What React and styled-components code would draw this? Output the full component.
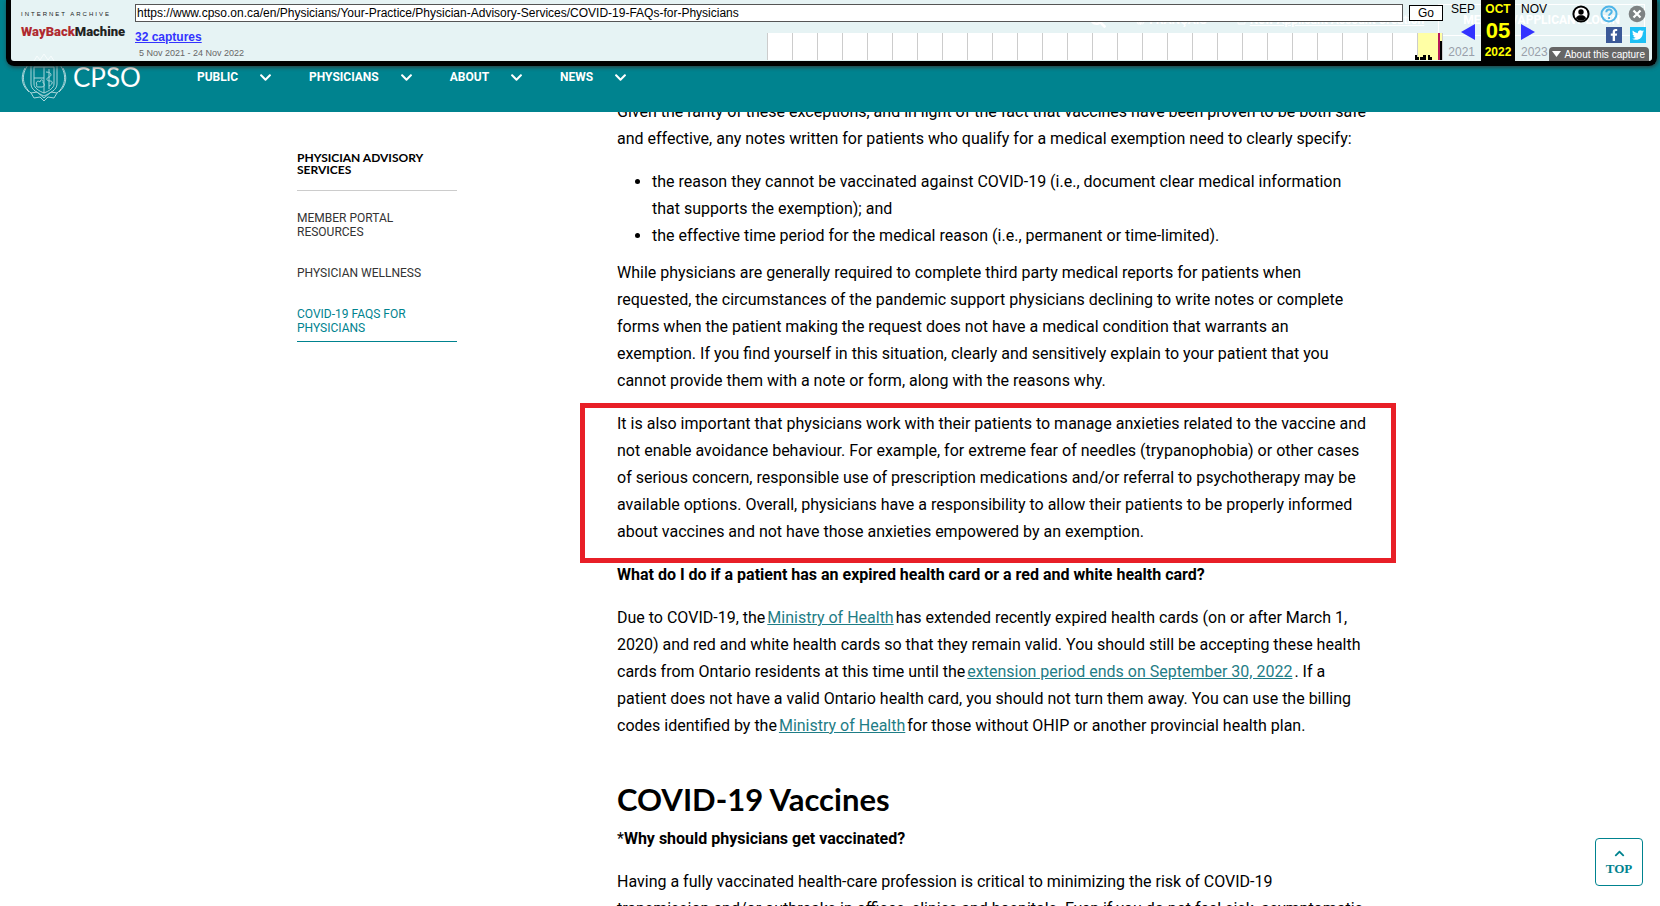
import React from 'react'
import styled, { createGlobalStyle } from 'styled-components'
import { FaChevronDown, FaChevronUp, FaFacebookF, FaTwitter, FaSearch, FaGlobe, FaRegSquare } from 'react-icons/fa'

const teal = '#00838f'

const menu = ['Public', 'Physicians', 'About', 'News']

const years = Array.from({ length: 27 }, (_, i) => 1996 + i)

const Crest = () => (
    <svg width="48" height="50" viewBox="0 0 48 50" fill="none" stroke="#a9d6da" strokeWidth="1">
        <path d="M11 12h26v20c0 6-7 9-13 12-6-3-13-6-13-12z" />
        <path d="M14 15h20v17c0 4-5 7-10 9-5-2-10-5-10-9z" />
        <path d="M24 15v26M14 26h10" />
        <path d="M17 33c-2-3 1-5 3-3 0-3 4-3 3 1 2 0 2 4-1 4h-4c-2 0-2-1-1-2z" />
        <path d="M29 17v20M26 20c6 0 6 4 3 5s-3 4 1 4 2 4-1 5" />
        <path d="M8 13c-7 9-6 21 3 28M5 16c-5 9-3 18 4 24M40 13c7 9 6 21-3 28M43 16c5 9 3 18-4 24" />
        <path d="M11 41l6-1 7 6 7-6 6 1-3 5-6-1-4 4-4-4-6 1z" />
        <path d="M14 9l3-5 3 4 4-6 4 6 3-4 3 5" />
    </svg>
)

const PersonIcon = () => (
    <svg width="18" height="18" viewBox="0 0 18 18">
        <circle cx="9" cy="9" r="7.6" fill="#fff" stroke="#000" strokeWidth="2" />
        <circle cx="9" cy="7" r="2.7" />
        <path d="M3.8 13.2c1.2-2.6 3-3 5.2-3s4 .4 5.2 3c-1.4 1.6-3.2 2.4-5.2 2.4s-3.8-.8-5.2-2.4z" />
    </svg>
)

const HelpIcon = () => (
    <svg width="18" height="18" viewBox="0 0 18 18" fill="none" stroke="#4fb5e8">
        <circle cx="9" cy="9" r="7.5" strokeWidth="2" />
        <path d="M6.3 7.2c0-3.6 5.4-3.6 5.4-.4 0 2-2.6 2-2.6 4" strokeWidth="2" />
        <path d="M9.1 12v2" strokeWidth="2" />
    </svg>
)

const CloseIcon = () => (
    <svg width="18" height="18" viewBox="0 0 18 18">
        <circle cx="9" cy="9" r="8.3" fill="#7d8283" />
        <path d="M5.5 5.5l7 7M12.5 5.5l-7 7" stroke="#fff" strokeWidth="2.2" />
    </svg>
)

const Wayback = () => (
    <Toolbar>
        <ArchiveLogo href="#archive">
            <ArchiveName>INTERNET ARCHIVE</ArchiveName>
            <MachineName><b>WayBack</b>Machine</MachineName>
        </ArchiveLogo>
        <Middle>
            <UrlForm onSubmit={(e) => e.preventDefault()}>
                <UrlInput
                    type="text"
                    aria-label="URL"
                    defaultValue="https://www.cpso.on.ca/en/Physicians/Your-Practice/Physician-Advisory-Services/COVID-19-FAQs-for-Physicians"
                />
                <GoButton type="submit">Go</GoButton>
            </UrlForm>
            <CaptureRow>
                <div>
                    <CaptureLink href="#captures">32 captures</CaptureLink>
                    <CaptureRange>5 Nov 2021 - 24 Nov 2022</CaptureRange>
                </div>
                <Sparkline>
                    {years.map((year) => <Year key={year} $current={year === 2022} />)}
                    <Bars width="28" height="27" viewBox="0 0 28 27" shapeRendering="crispEdges">
                        <path d="M0 22h2v5h-2zM2 24h2v3h-2zM5 24h3v3h-3zM8 22h3v5h-3zM13 22h2v5h-2zM15 24h2v3h-2z" />
                        <path d="M23 0h2v27h-2z" fill="#b8185a" />
                        <path d="M25 8h2v19h-2z" />
                    </Bars>
                </Sparkline>
            </CaptureRow>
        </Middle>
        <Month $align="right">
            <span>SEP</span>
            <Arrow href="#prev" aria-label="Previous capture">
                <svg width="14" height="16" viewBox="0 0 14 16"><path d="M14 0v16L0 8z" fill="#33f" /></svg>
            </Arrow>
            <MonthYear>2021</MonthYear>
        </Month>
        <CurrentMonth>
            <span>OCT</span>
            <Day>05</Day>
            <span>2022</span>
        </CurrentMonth>
        <Month $align="left">
            <span>NOV</span>
            <Arrow href="#next" aria-label="Next capture">
                <svg width="14" height="16" viewBox="0 0 14 16"><path d="M0 0v16l14-8z" fill="#33f" /></svg>
            </Arrow>
            <MonthYear>2023</MonthYear>
        </Month>
        <Tools>
            <ToolRow $gap={10}>
                <IconButton aria-label="Sign in"><PersonIcon /></IconButton>
                <IconButton aria-label="Help"><HelpIcon /></IconButton>
                <IconButton aria-label="Close"><CloseIcon /></IconButton>
            </ToolRow>
            <ToolRow $gap={8}>
                <Social href="#facebook" aria-label="Facebook" $color="#3b5998"><FaFacebookF size={12} /></Social>
                <Social href="#twitter" aria-label="Twitter" $color="#1dc0f5"><FaTwitter size={12} /></Social>
            </ToolRow>
            <AboutCapture>
                <svg width="9" height="6" viewBox="0 0 9 6"><path d="M0 0h9L4.5 6z" fill="#fff" /></svg>
                About this capture
            </AboutCapture>
        </Tools>
    </Toolbar>
)

const App = () => (
    <>
        <GlobalStyle />
        <Wayback />
        <Header>
            <UtilityNav>
                <FaSearch size={16} />
                <UtilityLink href="#francais"><FaGlobe size={9} />FRANÇAIS</UtilityLink>
                <UtilityLink href="#account"><FaRegSquare size={9} /><u>New Applicant Account Creation</u></UtilityLink>
                <Login href="#login">MEMBER/APPLICANT LOGIN</Login>
            </UtilityNav>
            <HeaderMain>
                <Brand href="#home"><Crest />CPSO</Brand>
                <Nav>
                    {menu.map((label) => (
                        <NavButton key={label}>
                            {label}
                            <FaChevronDown size={13} />
                        </NavButton>
                    ))}
                </Nav>
            </HeaderMain>
        </Header>
        <Page>
            <Sidebar>
                <SideTitle>Physician Advisory Services</SideTitle>
                <SideLink href="#portal">Member Portal Resources</SideLink>
                <SideLink href="#wellness">Physician Wellness</SideLink>
                <SideLink href="#faqs" $active>COVID-19 FAQs for Physicians</SideLink>
            </Sidebar>
            <Article>
                <p>
                    Given the rarity of these exceptions, and in light of the fact that vaccines have been proven to be both safe
                    and effective, any notes written for patients who qualify for a medical exemption need to clearly specify:
                </p>
                <List>
                    <li>
                        the reason they cannot be vaccinated against COVID-19 (i.e., document clear medical information
                        that supports the exemption); and
                    </li>
                    <li>the effective time period for the medical reason (i.e., permanent or time-limited).</li>
                </List>
                <p>
                    While physicians are generally required to complete third party medical reports for patients when
                    requested, the circumstances of the pandemic support physicians declining to write notes or complete
                    forms when the patient making the request does not have a medical condition that warrants an
                    exemption. If you find yourself in this situation, clearly and sensitively explain to your patient that you
                    cannot provide them with a note or form, along with the reasons why.
                </p>
                <Marked>
                    It is also important that physicians work with their patients to manage anxieties related to the vaccine and
                    not enable avoidance behaviour. For example, for extreme fear of needles (trypanophobia) or other cases
                    of serious concern, responsible use of prescription medications and/or referral to psychotherapy may be
                    available options. Overall, physicians have a responsibility to allow their patients to be properly informed
                    about vaccines and not have those anxieties empowered by an exemption.
                </Marked>
                <p><strong>What do I do if a patient has an expired health card or a red and white health card?</strong></p>
                <p>
                    Due to COVID-19, the<TextLink href="#ministry">Ministry of Health</TextLink>has extended recently expired health cards (on or after March 1,
                    2020) and red and white health cards so that they remain valid. You should still be accepting these health
                    cards from Ontario residents at this time until the<TextLink href="#extension">extension period ends on September 30, 2022</TextLink>. If a
                    patient does not have a valid Ontario health card, you should not turn them away. You can use the billing
                    codes identified by the<TextLink href="#ohip">Ministry of Health</TextLink>for those without OHIP or another provincial health plan.
                </p>
                <h2>COVID-19 Vaccines</h2>
                <p>*<strong>Why should physicians get vaccinated?</strong></p>
                <p>
                    Having a fully vaccinated health-care profession is critical to minimizing the risk of COVID-19
                    transmission and/or outbreaks in offices, clinics and hospitals. Even if you do not feel sick, asymptomatic
                </p>
            </Article>
        </Page>
        <TopButton>
            <FaChevronUp size={11} />
            TOP
        </TopButton>
    </>
)

const GlobalStyle = createGlobalStyle`
    * {
        box-sizing: border-box;
    }

    body {
        margin: 0;
        background: #fff;
        color: #000;
        font-family: Roboto, sans-serif;
        font-size: 16px;
        line-height: 27px;
    }

    #root {
        height: 100vh;
        overflow: hidden;
    }

    button {
        font: inherit;
        border: 0;
        padding: 0;
        background: none;
        cursor: pointer;
    }

    svg {
        display: block;
        flex: none;
    }
`

const Toolbar = styled.div`
    position: fixed;
    z-index: 20;
    top: 0;
    left: 6px;
    right: 3px;
    height: 66px;
    display: flex;
    border: 5px solid #000;
    border-top: 0;
    border-radius: 0 0 8px 8px;
    background: rgba(255, 255, 255, .9);
    box-shadow: 1px 1px 4px #333;
    color: #000;
    font-family: "Liberation Sans", sans-serif;
    font-size: 12px;
    line-height: 14px;
`

const ArchiveLogo = styled.a`
    width: 114px;
    padding: 10px 0 0 10px;
    color: #222;
    text-decoration: none;
    white-space: nowrap;
`

const ArchiveName = styled.div`
    font: 6px/8px "Liberation Sans", sans-serif;
    letter-spacing: 2px;
`

const MachineName = styled.div`
    font: 900 13px/28px Roboto, sans-serif;

    b {
        color: #b02a30;
        font-weight: 900;
    }
`

const Middle = styled.div`
    flex: 1;
    min-width: 0;
    padding: 4px 0 0 10px;
`

const UrlForm = styled.form`
    display: flex;
    align-items: center;
    gap: 6px;
    margin: 0;
`

const UrlInput = styled.input`
    flex: 1;
    min-width: 0;
    height: 18px;
    padding: 0 1px;
    border: 1px solid #555;
    background: #fff;
    color: #000;
    font: 12px "Liberation Sans", sans-serif;
`

const GoButton = styled.button`
    width: 34px;
    height: 16px;
    border: 1px solid #000;
    background: #fff;
`

const CaptureRow = styled.div`
    display: flex;
    justify-content: space-between;
    padding-top: 8px;
`

const CaptureLink = styled.a`
    color: #33f;
    font-weight: bold;
`

const CaptureRange = styled.div`
    padding: 2px 0 0 4px;
    color: #666;
    font-size: 9px;
`

const Sparkline = styled.div`
    position: relative;
    display: flex;
    margin-top: 3px;
    border-left: 1px solid #ccc;
`

const Year = styled.div`
    width: 25px;
    height: 27px;
    border-right: 1px solid #ccc;
    background: ${(props) => (props.$current ? '#ffffa5' : '#fff')};
`

const Bars = styled.svg`
    position: absolute;
    right: 0;
    bottom: 0;
`

const Month = styled.div`
    display: flex;
    flex-direction: column;
    justify-content: space-between;
    align-items: ${(props) => (props.$align === 'right' ? 'flex-end' : 'flex-start')};
    width: 38px;
    padding: 2px 6px;
`

const Arrow = styled.a`
    padding-top: 3px;
`

const MonthYear = styled.span`
    color: #999faa;
`

const CurrentMonth = styled(Month)`
    align-items: center;
    width: 34px;
    padding: 2px 0;
    background: #000;
    color: #ff0;
    font-weight: bold;
`

const Day = styled.span`
    font-size: 22px;
    line-height: 22px;
`

const Tools = styled.div`
    display: flex;
    flex-direction: column;
    align-items: flex-end;
    justify-content: space-between;
    width: 99px;
    padding-top: 5px;
`

const ToolRow = styled.div`
    display: flex;
    gap: ${(props) => props.$gap}px;
    padding-right: 6px;
`

const IconButton = styled.button`
    display: flex;
`

const Social = styled.a`
    display: flex;
    align-items: center;
    justify-content: center;
    width: 16px;
    height: 16px;
    background: ${(props) => props.$color};
    color: #fff;
`

const AboutCapture = styled.button`
    display: flex;
    align-items: center;
    gap: 3px;
    height: 14px;
    padding: 0 4px 0 3px;
    margin-right: 3px;
    border-radius: 4px 4px 0 0;
    background: #666;
    color: #fff;
    font: 10px "Liberation Sans", sans-serif;
    white-space: nowrap;
`

const Header = styled.header`
    position: fixed;
    z-index: 10;
    top: 0;
    left: 0;
    right: 0;
    height: 112px;
    background: ${teal};
    color: #fff;
`

const UtilityNav = styled.div`
    display: flex;
    justify-content: flex-end;
    align-items: center;
    gap: 30px;
    padding: 4px 15px 0 0;
    font-size: 12px;
    font-weight: bold;
    line-height: 14px;
`

const UtilityLink = styled.a`
    display: flex;
    align-items: center;
    gap: 4px;
    color: #fff;
    text-decoration: none;
`

const Login = styled.a`
    margin-left: -16px;
    padding: 8px 24px;
    border: 1px solid #fff;
    color: #fff;
    text-decoration: none;
`

const HeaderMain = styled.div`
    display: flex;
    align-items: center;
    gap: 56px;
    padding: 16px 0 0 20px;
`

const Brand = styled.a`
    display: flex;
    align-items: center;
    gap: 5px;
    color: #fff;
    font: 26px/28px Lato, sans-serif;
    text-decoration: none;
`

const Nav = styled.nav`
    display: flex;
    gap: 37px;
`

const NavButton = styled.button`
    display: flex;
    align-items: center;
    gap: 21px;
    color: #fff;
    font-size: 12px;
    font-weight: bold;
    line-height: 16px;
    text-transform: uppercase;
`

const Page = styled.main`
    display: grid;
    grid-template-columns: 160px minmax(0, 750px);
    gap: 160px;
    max-width: 1078px;
    margin: 0 auto;
    padding: 98px 0 0 6px;
`

const Sidebar = styled.nav`
    display: flex;
    flex-direction: column;
    padding-top: 54px;
    font-size: 12px;
    line-height: 14px;
    text-transform: uppercase;
`

const SideTitle = styled.h2`
    margin: 0 0 20px;
    padding-bottom: 14px;
    border-bottom: 1px solid #ccc;
    font: bold 12px/12px Lato, sans-serif;
`

const SideLink = styled.a`
    margin-bottom: 20px;
    padding-bottom: 6px;
    border-bottom: 1px solid ${(props) => (props.$active ? teal : 'transparent')};
    color: ${(props) => (props.$active ? teal : '#333')};
    text-decoration: none;
`

const Article = styled.article`
    p {
        margin: 0 0 16px;
    }

    h2 {
        margin: 42px 0 8px;
        font: bold 31px/36px Lato, sans-serif;
    }
`

const List = styled.ul`
    margin: 0 0 10px;
    padding-left: 35px;
`

const Marked = styled.p`
    position: relative;

    &::after {
        content: '';
        position: absolute;
        inset: -7px -29px -18px -37px;
        border: 5px solid #e81f27;
    }
`

const TextLink = styled.a`
    margin: 0 2px;
    color: #1f7d86;
`

const TopButton = styled.button`
    position: fixed;
    right: 17px;
    bottom: 20px;
    display: flex;
    flex-direction: column;
    align-items: center;
    justify-content: center;
    gap: 2px;
    width: 48px;
    height: 48px;
    border: 1px solid ${teal};
    border-radius: 4px;
    background: #fff;
    color: ${teal};
    font: bold 13px/16px "Liberation Serif", serif;
`

export default App
